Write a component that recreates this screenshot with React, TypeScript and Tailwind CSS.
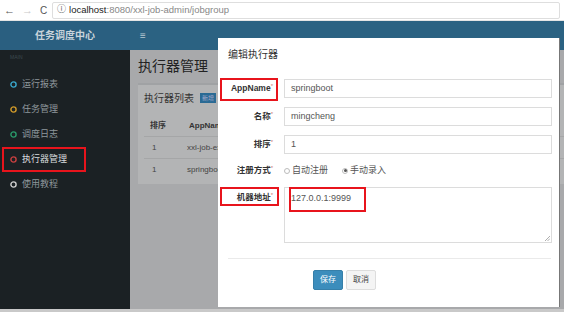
import React from "react";

const font = { fontFamily: '"Liberation Sans", "Noto Sans CJK SC", sans-serif' };

function Circle({ color }: { color: string }) {
  return (
    <svg width="7" height="7" viewBox="0 0 7 7" className="shrink-0">
      <circle cx="3.5" cy="3.5" r="2.6" fill="none" stroke={color} strokeWidth="1.4" />
    </svg>
  );
}

function MenuItem({ color, text, active }: { color: string; text: string; active?: boolean }) {
  return (
    <div className="h-[25px] flex items-center gap-[5px] pl-[10px]">
      <Circle color={color} />
      <span className={active ? "text-[9px] text-[#d8dcde]" : "text-[9px] text-[#8f989c]"}>{text}</span>
    </div>
  );
}

function Star() {
  return <sup className="text-[6px] text-[#c77] font-normal">*</sup>;
}

function Row({ label, value, boxed }: { label: string; value: string; boxed?: boolean }) {
  return (
    <div className="flex items-center h-[19px]">
      <div className="w-[66px] flex justify-end pr-[11px] relative">
        {boxed ? (
          <div className="absolute left-[2px] top-[-4px] w-[58px] h-[23px] border-2 border-[#e8141c]" />
        ) : null}
        <span className="text-[8.5px] font-bold text-[#333]">
          {label}
          <Star />
        </span>
      </div>
      <div className="flex-1 h-[19px] border border-[#dcdcdc] flex items-center pl-[6px] text-[9px] text-[#555]">
        {value}
      </div>
    </div>
  );
}

export default function App() {
  return (
    <div className="w-[564px] h-[312px] relative overflow-hidden bg-[#e9e9e9]" style={font}>
      {/* browser chrome */}
      <div className="h-[21px] bg-white flex items-center border-b border-[#e4e4e4]">
        <div className="w-[52px] flex items-center pl-[4px] gap-[7px] text-[11px]">
          <span className="text-[#555]">←</span>
          <span className="text-[#c8c8c8]">→</span>
          <span className="text-[#555] text-[10px]">C</span>
        </div>
        <div className="flex-1 mr-[4px] h-[17px] border border-[#dedede] rounded-[2px] flex items-center pl-[4px] text-[9.5px]">
          <span className="text-[#555] mr-[3px] text-[9px]">ⓘ</span>
          <span className="text-[#222]">localhost</span>
          <span className="text-[#888]">:8080/xxl-job-admin/jobgroup</span>
        </div>
      </div>
      <div className="flex h-[288px]">
        {/* left column */}
        <div className="w-[130px] flex flex-col">
          <div className="h-[29px] bg-[#2a5f80] flex items-center justify-center">
            <span className="text-[10px] font-bold text-[#c9d4db]">任务调度中心</span>
          </div>
          <div className="flex-1 bg-[#1b2124] pt-[2px]">
            <div className="pl-[10px] text-[5px] leading-[10px] text-[#3d4a50] h-[10px]">MAIN</div>
            <div className="h-[10px]" />
            <MenuItem color="#3aa8cc" text="运行报表" />
            <MenuItem color="#d09a2a" text="任务管理" />
            <MenuItem color="#2a9a6a" text="调度日志" />
            <div className="relative">
              <div className="absolute left-[2px] top-[0px] w-[84px] h-[25px] border-2 border-[#e8141c]" />
              <MenuItem color="#c84040" text="执行器管理" active />
            </div>
            <MenuItem color="#d0d0d0" text="使用教程" />
          </div>
        </div>
        {/* right column */}
        <div className="flex-1 flex flex-col">
          <div className="h-[29px] bg-[#2b6282] flex items-center pl-[10px]">
            <span className="text-[10px] text-[#b8c8d2]">≡</span>
          </div>
          <div className="flex-1 bg-[#a8a9ab] pl-[8px] pt-[6px]">
            <div className="text-[14px] text-[#222] h-[20px] leading-[20px]">执行器管理</div>
            <div className="mt-[7px] h-[101px] bg-[#b3b4b5] border-t-2 border-[#a0a2a4] pl-[6px]">
              <div className="h-[22px] flex items-center gap-[6px] mt-[2px]">
                <span className="text-[10px] text-[#333]">执行器列表</span>
                <span className="bg-[#2a6a94] text-[#aac] text-[6px] px-[2px] h-[10px] leading-[10px]">新增</span>
              </div>
              <div className="mt-[6px] h-[22px] flex items-center text-[8px] font-bold text-[#333] border-b border-[#a5a6a7]">
                <span className="w-[45px] pl-[6px]">排序</span>
                <span>AppName</span>
              </div>
              <div className="h-[22px] flex items-center text-[8px] text-[#444] border-b border-[#a5a6a7]">
                <span className="w-[43px] pl-[8px]">1</span>
                <span>xxl-job-executor</span>
              </div>
              <div className="h-[22px] flex items-center text-[8px] text-[#444]">
                <span className="w-[43px] pl-[8px]">1</span>
                <span>springboot</span>
              </div>
            </div>
          </div>
        </div>
      </div>
      <div className="h-[3px] bg-[#c9c9c9]" />

      {/* modal */}
      <div className="absolute left-[218px] top-[38px] w-[342px] h-[269px] bg-white flex flex-col border-r border-[#777]">
        <div className="h-[41px] pl-[10px] pt-[10px] text-[10px] leading-[14px] text-[#333]">编辑执行器</div>
        <div className="pr-[7px] flex flex-col">
          <Row label="AppName" value="springboot" boxed />
          <div className="h-[9px]" />
          <Row label="名称" value="mingcheng" />
          <div className="h-[9px]" />
          <Row label="排序" value="1" />
          <div className="h-[9px]" />
          <div className="flex items-center h-[15px]">
            <div className="w-[66px] flex justify-end pr-[11px]">
              <span className="text-[8.5px] font-bold text-[#333]">
                注册方式<Star />
              </span>
            </div>
            <div className="flex items-center text-[9px] text-[#555]">
              <span className="w-[6px] h-[6px] rounded-full border border-[#bbb] mr-[2px]" />
              <span>自动注册</span>
              <span className="ml-[14px] w-[6px] h-[6px] rounded-full border border-[#bbb] mr-[2px] flex items-center justify-center">
                <span className="w-[3px] h-[3px] rounded-full bg-[#555]" />
              </span>
              <span>手动录入</span>
            </div>
          </div>
          <div className="h-[9px]" />
          <div className="flex h-[56px]">
            <div className="w-[66px] flex justify-end pr-[11px] pt-[4px] relative">
              <div className="absolute left-[2px] top-[0px] w-[59px] h-[19px] border-2 border-[#e8141c]" />
              <span className="text-[8.5px] font-bold text-[#333]">
                机器地址<Star />
              </span>
            </div>
            <div className="flex-1 border border-[#dcdcdc] relative pl-[6px] pt-[4px] text-[9px] text-[#555]">
              127.0.0.1:9999
              <div className="absolute left-[4px] top-[-1px] w-[77px] h-[25px] border-2 border-[#e8141c]" />
              <svg className="absolute right-[1px] bottom-[1px]" width="5" height="5" viewBox="0 0 5 5">
                <path d="M5 0 L0 5 M5 2.5 L2.5 5" stroke="#999" strokeWidth="0.8" />
              </svg>
            </div>
          </div>
        </div>
        <div className="mt-[15px] mx-[10px] mr-[8px] border-t border-[#eaeaea]" />
        <div className="mt-[11px] pl-[95px] flex gap-[3px]">
          <div className="w-[30px] h-[20px] bg-[#3c8dbc] border border-[#367fa9] rounded-[2px] flex items-center justify-center text-[8px] text-white">保存</div>
          <div className="w-[30px] h-[20px] bg-[#f4f4f4] border border-[#ddd] rounded-[2px] flex items-center justify-center text-[8px] text-[#444]">取消</div>
        </div>
      </div>
    </div>
  );
}
